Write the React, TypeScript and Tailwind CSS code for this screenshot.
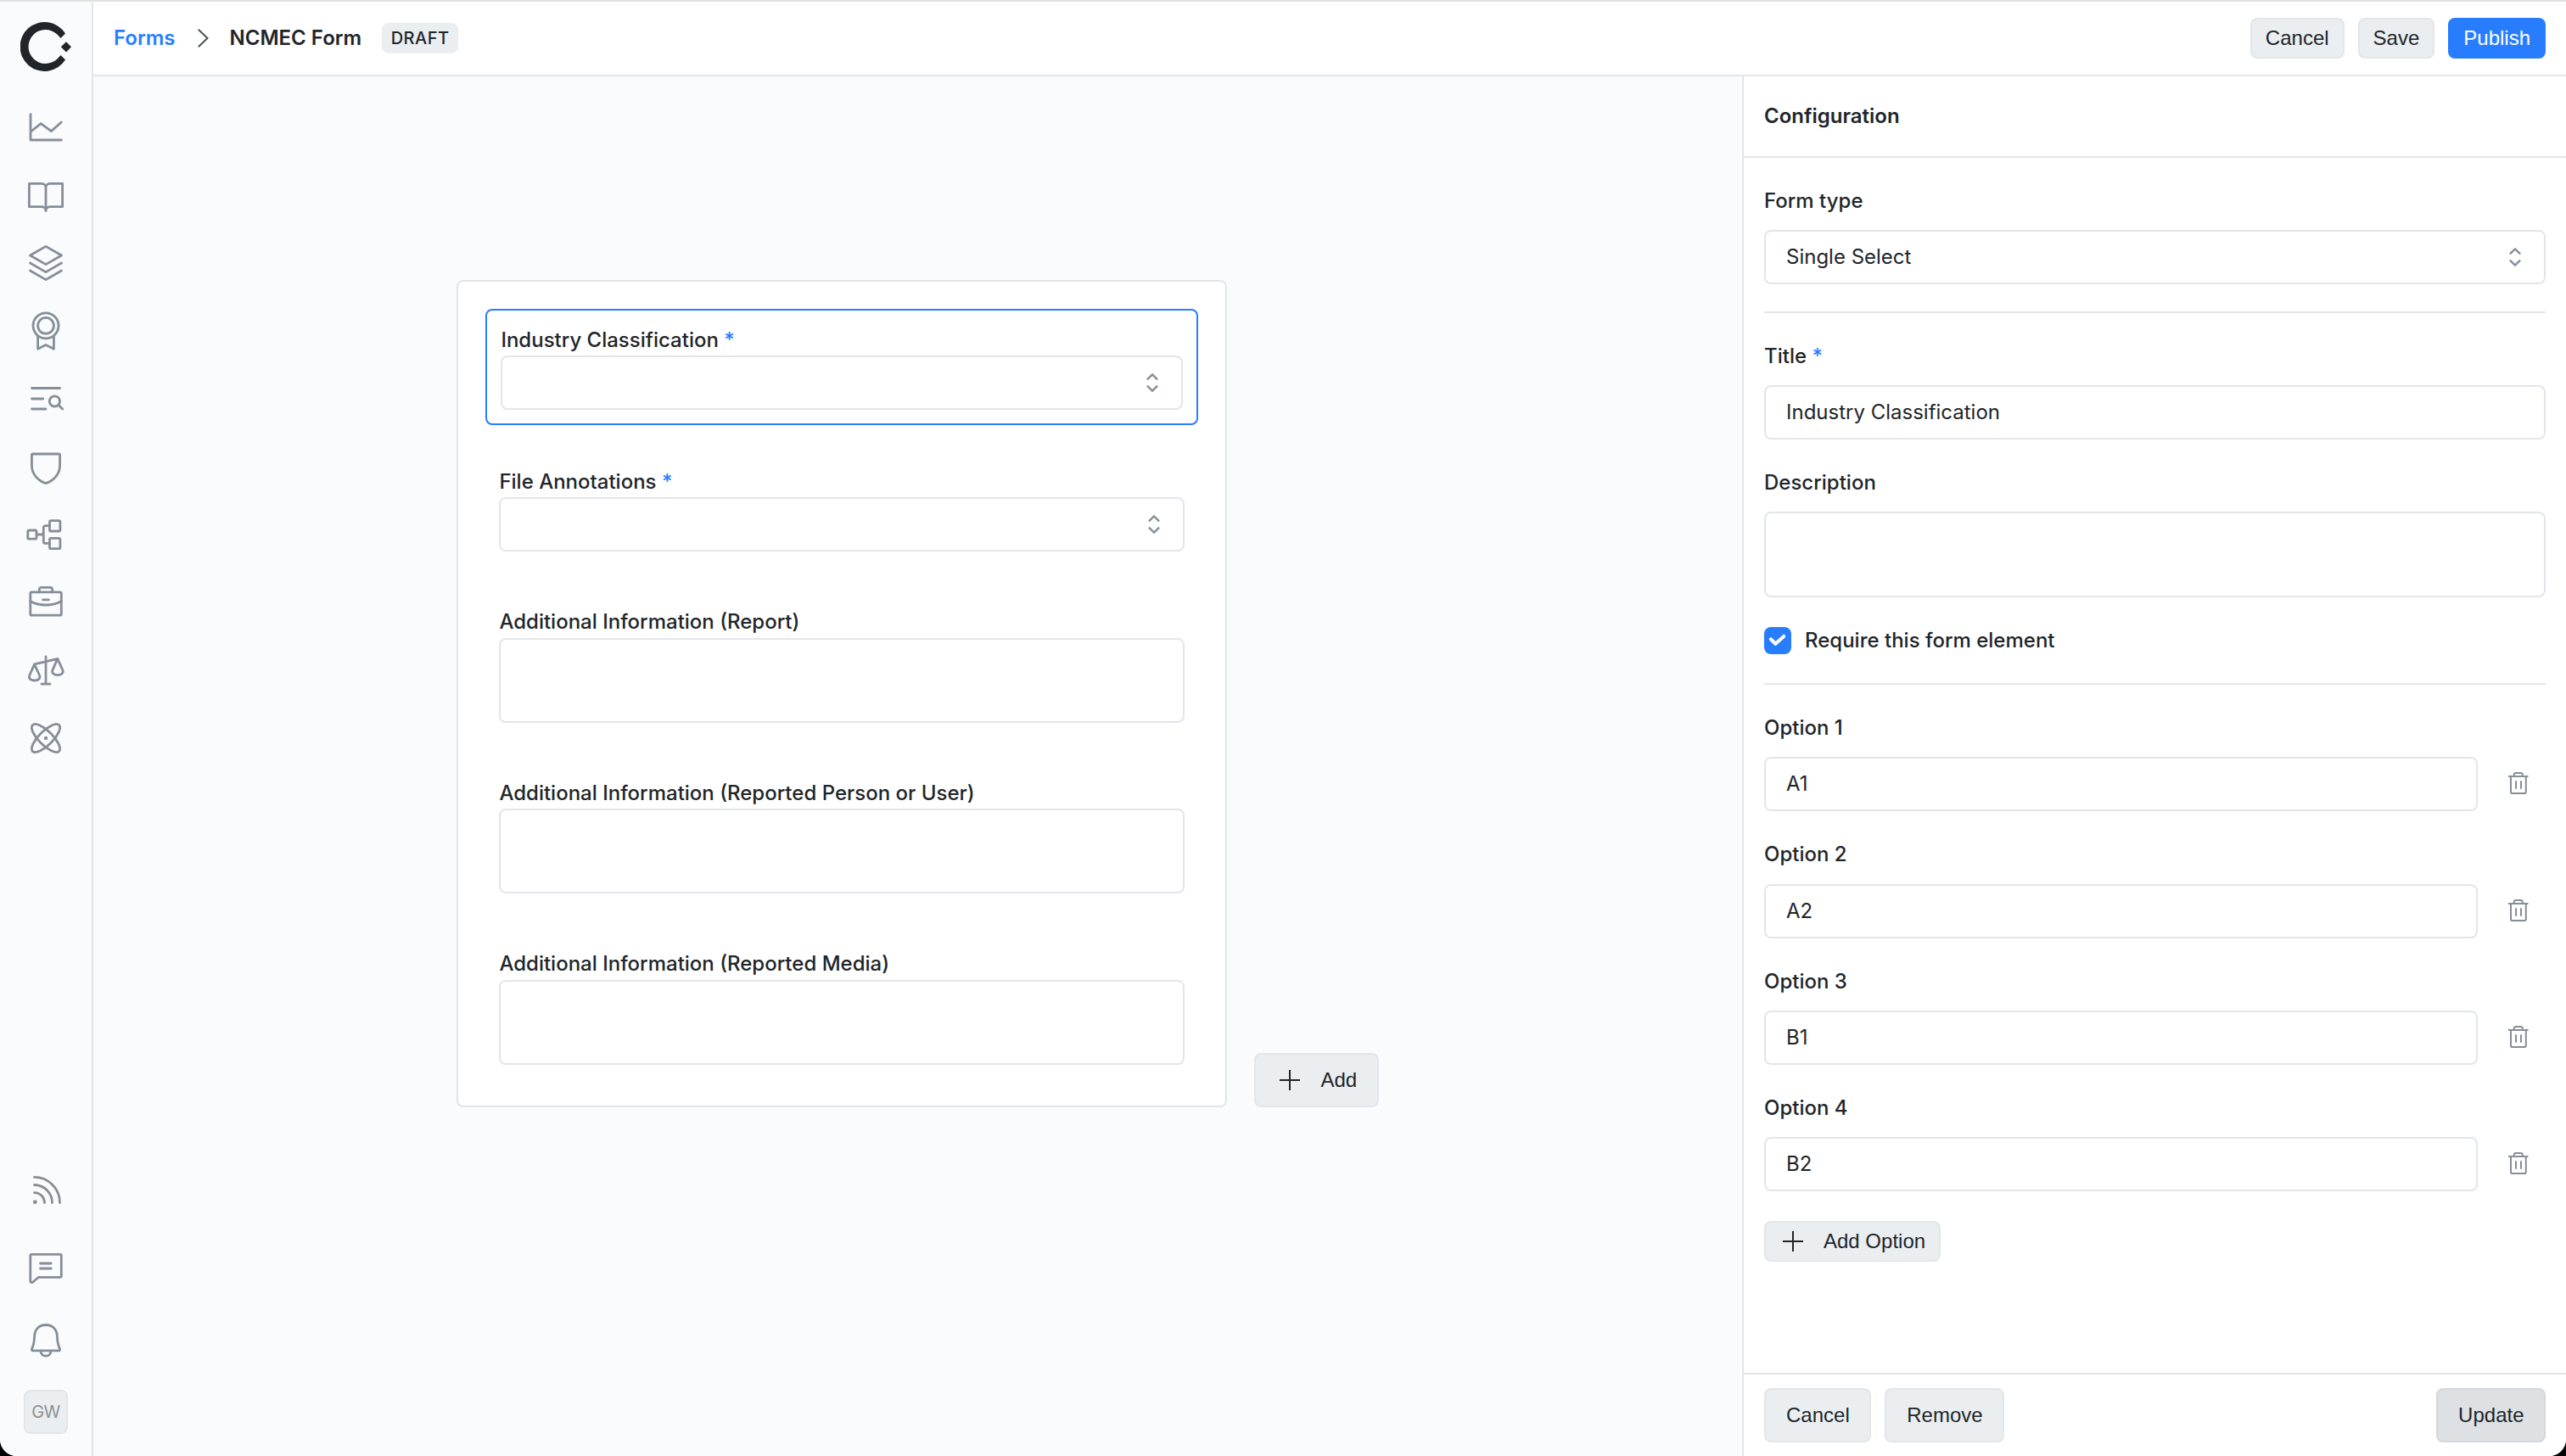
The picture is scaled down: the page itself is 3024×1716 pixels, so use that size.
import type { ReactNode } from "react";
import { clsx } from "clsx";

/* ------------------------------------------------------------------ */
/*  Icons                                                             */
/* ------------------------------------------------------------------ */

function NavIcon({ children }: { children: ReactNode }) {
  return (
    <svg
      viewBox="0 0 40 40"
      className="size-10 shrink-0 overflow-visible text-[#868e98]"
      fill="none"
      stroke="currentColor"
      strokeWidth={2.8}
      strokeLinecap="round"
      strokeLinejoin="round"
    >
      {children}
    </svg>
  );
}

function Logo() {
  return (
    <svg viewBox="0 0 60 58" className="h-[58px] w-[60px] shrink-0" fill="#212529">
      <path d="M53 13.4A29 29 0 1 0 53 44.6L47.6 39l-4.2 4.4a20 20 0 1 1 0-28.8l4.2 4.4z" />
      <path d="M54 23.2l6 6.1-6 6.1-6.2-6.1z" />
    </svg>
  );
}

function Selector() {
  return (
    <svg viewBox="0 0 14 22" className="h-[22px] w-3.5 shrink-0" fill="none" stroke="#868e98" strokeWidth={2.4}>
      <path d="M.9 7.4L7 1.4l6.1 6M.9 14.6l6.1 6 6.1-6" />
    </svg>
  );
}

function PlusIcon() {
  return (
    <svg viewBox="0 0 32 32" className="size-8 shrink-0" fill="none" stroke="#212529" strokeWidth={2}>
      <path d="M4 16h24M16 4v24" />
    </svg>
  );
}

function TrashIcon() {
  return (
    <svg viewBox="0 0 24 26" className="h-[26px] w-6" fill="none" stroke="#868e98" strokeWidth={2}>
      <path d="M0 5h23.5M6.8 5V3.2C6.8 1.8 7.6 1 9 1h5.6c1.4 0 2.2.8 2.2 2.2V5" />
      <path d="M3 5v18.2c0 1 .8 1.8 1.8 1.8H19c1 0 1.800-.8 1.800-1.800V5M9 10.300v9.400M15 10.300v9.400" />
    </svg>
  );
}

const mainNav: { name: string; icon: ReactNode }[] = [
  { name: "overview", icon: <path d="M2 4.7V35h36.3M2.4 25L14.2 15.6l12.2 9L38.3 14" /> },
  {
    name: "policies",
    icon: (
      <path d="M20 11c0-2.6-2-4.7-5-4.7H.4v27.4H15c3 0 5 2 5 5 0-3 2-5 5-5h14.6V6.3H25c-3 0-5 2.1-5 4.7v27.7" />
    ),
  },
  { name: "items", icon: <path d="M20 .4L38.5 11 20 21.6 1.5 11zM1.5 20L20 30.6 38.5 20M1.5 29L20 39.6 38.5 29" /> },
  {
    name: "rules",
    icon: (
      <>
        <circle cx="20" cy="13.8" r="15" />
        <circle cx="20" cy="13.8" r="9.4" />
        <path d="M10.6 26.5v14.8L20 36.4l9.4 4.9V26.5" />
      </>
    ),
  },
  {
    name: "investigation",
    icon: (
      <>
        <path d="M3.5 7.5h33M3.5 20h13.2M3.5 32H20M35 27.5l4.7 4.6" />
        <circle cx="30.4" cy="22.9" r="6.1" />
      </>
    ),
  },
  {
    name: "enforcement",
    icon: <path d="M4.4 5h31.2c.6 0 1 .4 1 1v12.5c0 10-7 17.8-16.6 21.1C10.4 36.3 3.4 28.5 3.4 18.5V6c0-.6.4-1 1-1z" />,
  },
  {
    name: "workflows",
    icon: (
      <>
        <rect x="-1.2" y="15" width="10.2" height="10.2" rx="1.5" />
        <rect x="24.5" y="3.7" width="12.4" height="12.3" rx="1.5" />
        <rect x="24.5" y="24.4" width="12.4" height="12.3" rx="1.5" />
        <path d="M9 20h8.300M24.500 9.600h-4.700c-1.600 0-2.500 1-2.500 2.500v15.800c0 1.600 1 2.500 2.500 2.500h4.700" />
      </>
    ),
  },
  {
    name: "cases",
    icon: (
      <>
        <rect x="1.8" y="7.9" width="36.5" height="27.3" rx="1.5" />
        <path d="M12.3 7.9V5c0-1.7 1-2.7 2.7-2.7h10c1.7 0 2.7 1 2.7 2.7v2.9M16.5 16.8h7M1.8 18.5c5 3 11.5 4.5 18.2 4.5s13.200-1.500 18.300-4.500" />
      </>
    ),
  },
  {
    name: "appeals",
    icon: (
      <path d="M20 3.800V36M15 36.200h10M6.500 12.900L34 6.400M6.500 12.900L.8 26c-1.500 3.600 1.800 6 5.900 6s7.400-2.400 5.900-6zM33.800 6.400L28 19.600c-1.500 3.600 1.800 6 5.900 6s7.400-2.400 5.900-6z" />
    ),
  },
  {
    name: "models",
    icon: (
      <>
        <ellipse cx="20" cy="20" rx="22" ry="8.2" transform="rotate(45 20 20)" />
        <ellipse cx="20" cy="20" rx="22" ry="8.2" transform="rotate(-45 20 20)" />
        <circle cx="20" cy="20" r="2.2" fill="currentColor" stroke="none" />
      </>
    ),
  },
];

const footerNav: { name: string; icon: ReactNode }[] = [
  {
    name: "feed",
    icon: (
      <>
        <path d="M6.500 21.600a12 12 0 0 1 12 12M6.500 12.500a21 21 0 0 1 21 21.100M6.500 3.400a30 30 0 0 1 30 30.200" />
        <circle cx="7.3" cy="32.7" r="2.4" fill="currentColor" stroke="none" />
      </>
    ),
  },
  {
    name: "feedback",
    icon: (
      <path d="M3.3 6.3h33.400c.9 0 1.600.7 1.600 1.600v23.800c0 .9-.7 1.600-1.600 1.600H11.500L5 38.800c-1.500 1.200-3.200 1-3.200-1V7.900c0-.9.6-1.600 1.500-1.600zM13.500 17h12.700M13.500 23h12.700" />
    ),
  },
  {
    name: "notifications",
    icon: (
      <path d="M20 1.500C12 1.500 6.800 7 6.600 15c-.2 6.500-.5 9.500-3 14.500-.6 1.200 0 2.300 1 2.300h30.800c1 0 1.600-1.100 1-2.300-2.500-5-2.800-8-3-14.500C33.200 7 28 1.500 20 1.500zM14 32c0 4 2.500 6.200 6 6.200s6-2.200 6-6.200" />
    ),
  },
];

/* ------------------------------------------------------------------ */
/*  Form primitives                                                   */
/* ------------------------------------------------------------------ */

const box = "rounded-lg border-2 border-[#e2e6ea] bg-white";

function Button({
  children,
  large,
  tone = "default",
}: {
  children: ReactNode;
  large?: boolean;
  tone?: "default" | "primary" | "muted";
}) {
  return (
    <button
      type="button"
      className={clsx(
        "flex shrink-0 items-center gap-5 rounded-lg border-2 font-['Liberation_Sans',sans-serif] text-2xl",
        large ? "h-16 pr-[23.5px] pl-6" : "h-12 px-4",
        tone === "default" && "border-[#e2e6ea] bg-[#ebeef1]",
        tone === "primary" && "border-[#287dff] bg-[#287dff] text-white",
        tone === "muted" && "border-[#d4d8dc] bg-[#dde1e4]"
      )}
    >
      {children}
    </button>
  );
}

function Label({ children, required }: { children: ReactNode; required?: boolean }) {
  return (
    <div className="text-2xl leading-[29.33px] font-medium whitespace-pre">
      {children}
      {required && <span className="text-[#287dff]"> *</span>}
    </div>
  );
}

function Select({ value }: { value?: string }) {
  return (
    <div className={clsx(box, "flex h-16 items-center justify-between pr-[27px] pl-6 text-2xl")}>
      <span>{value}</span>
      <Selector />
    </div>
  );
}

function TextInput({ value }: { value: string }) {
  return <input className={clsx(box, "block h-16 w-full px-6 pb-px text-2xl outline-none")} defaultValue={value} />;
}

function TextArea() {
  return <textarea className={clsx(box, "block h-[100.3px] w-full resize-none outline-none")} />;
}

function ConfigField({ label, required, children }: { label: string; required?: boolean; children: ReactNode }) {
  return (
    <div className="flex flex-col gap-5 pt-9">
      <Label required={required}>{label}</Label>
      {children}
    </div>
  );
}

/* ------------------------------------------------------------------ */
/*  Page sections                                                     */
/* ------------------------------------------------------------------ */

function Sidebar() {
  return (
    <aside className="flex w-[110px] shrink-0 flex-col items-center border-r-2 border-[#e2e6ea] bg-[#fafbfd] pt-6 pb-[26px]">
      <Logo />
      <nav className="mt-[46px] flex flex-col gap-10">
        {mainNav.map((n) => (
          <NavIcon key={n.name}>{n.icon}</NavIcon>
        ))}
      </nav>
      <nav className="mt-auto flex flex-col gap-12">
        {footerNav.map((n) => (
          <NavIcon key={n.name}>{n.icon}</NavIcon>
        ))}
      </nav>
      <div className="mt-[38px] flex size-13 items-center justify-center rounded-lg border-2 border-[#e2e6ea] bg-[#ebeef1] text-xl tracking-tight text-[#8c8f92]">
        GW
      </div>
    </aside>
  );
}

function Header() {
  return (
    <header className="flex h-22 shrink-0 items-center border-b-2 border-[#e2e6ea] bg-white px-6">
      <span className="text-2xl font-semibold text-[#287dff]">Forms</span>
      <svg viewBox="0 0 12 22" className="mx-[26px] h-[22px] w-3 overflow-visible" fill="none" stroke="#4d5257" strokeWidth={2}>
        <path d="M.8.8L11.500 11 .8 21.200" />
      </svg>
      <span className="text-2xl font-semibold">NCMEC Form</span>
      <span className="ml-6 flex h-9 items-center rounded-lg bg-[#ebeef1] px-[10.5px] text-xl font-medium tracking-wide">
        DRAFT
      </span>
      <div className="ml-auto flex gap-4">
        <Button>Cancel</Button>
        <Button>Save</Button>
        <Button tone="primary">Publish</Button>
      </div>
    </header>
  );
}

const elements = [
  { title: "Industry Classification", type: "select", required: true, selected: true },
  { title: "File Annotations", type: "select", required: true },
  { title: "Additional Information (Report)", type: "text" },
  { title: "Additional Information (Reported Person or User)", type: "text" },
  { title: "Additional Information (Reported Media)", type: "text" },
];

function Canvas() {
  return (
    <main className="flex flex-1 items-start justify-center bg-[#fafbfd] pt-60">
      <div className="flex items-end gap-8">
        <div className="flex w-[908px] flex-col gap-8 rounded-lg border-2 border-[#e2e6ea] bg-white p-8">
          {elements.map((el) => (
            <div key={el.title} className={clsx("p-4", el.selected && "rounded-lg border-2 border-[#287dff]")}>
              <div className="pt-1 pb-[3.87px]">
                <Label required={el.required}>{el.title}</Label>
              </div>
              {el.type === "select" ? <Select /> : <TextArea />}
            </div>
          ))}
        </div>
        <Button large>
          <PlusIcon />
          Add
        </Button>
      </div>
    </main>
  );
}

const options = ["A1", "A2", "B1", "B2"];

function ConfigPanel() {
  return (
    <aside className="flex w-[971px] shrink-0 flex-col border-l-2 border-[#e2e6ea] bg-white">
      <div className="flex h-24 shrink-0 items-center border-b-2 border-[#e2e6ea] px-6 text-2xl font-semibold">
        Configuration
      </div>
      <div className="flex-1 px-6">
        <div className="border-b-2 border-[#e2e6ea] pb-[31.5px]">
          <ConfigField label="Form type">
            <Select value="Single Select" />
          </ConfigField>
        </div>
        <div className="border-b-2 border-[#e2e6ea] pb-[34px]">
          <ConfigField label="Title" required>
            <TextInput value="Industry Classification" />
          </ConfigField>
          <ConfigField label="Description">
            <TextArea />
          </ConfigField>
          <div className="flex items-center gap-4 pt-[35.2px]">
            <span className="flex size-8 items-center justify-center rounded-lg bg-[#287dff]">
              <svg
                viewBox="0 0 32 32"
                className="size-8"
                fill="none"
                stroke="white"
                strokeWidth={4}
                strokeLinecap="round"
                strokeLinejoin="round"
              >
                <path d="M7.800 14.300l5.600 5.500 9.800-8.900" />
              </svg>
            </span>
            <Label>Require this form element</Label>
          </div>
        </div>
        {options.map((value, i) => (
          <ConfigField key={value} label={`Option ${i + 1}`}>
            <div className="flex items-center gap-9 pr-5">
              <TextInput value={value} />
              <button type="button" className="mb-0.5 shrink-0" aria-label="Delete option">
                <TrashIcon />
              </button>
            </div>
          </ConfigField>
        ))}
        <div className="flex pt-[35px]">
          <Button>
            <PlusIcon />
            Add Option
          </Button>
        </div>
      </div>
      <footer className="flex h-[98px] shrink-0 gap-4 border-t-2 border-[#e2e6ea] px-6 pt-4">
        <Button large>Cancel</Button>
        <Button large>Remove</Button>
        <div className="ml-auto">
          <Button large tone="muted">
            Update
          </Button>
        </div>
      </footer>
    </aside>
  );
}

export default function App() {
  return (
    <div className="h-[1716px] w-[3024px] bg-black">
      <div className="flex h-full overflow-hidden rounded-b-[20px] border-t-2 border-[#e1e2e0] bg-white font-['Inter',sans-serif] text-[#212529]">
        <Sidebar />
        <div className="flex min-w-0 flex-1 flex-col">
          <Header />
          <div className="flex min-h-0 flex-1">
            <Canvas />
            <ConfigPanel />
          </div>
        </div>
      </div>
    </div>
  );
}
